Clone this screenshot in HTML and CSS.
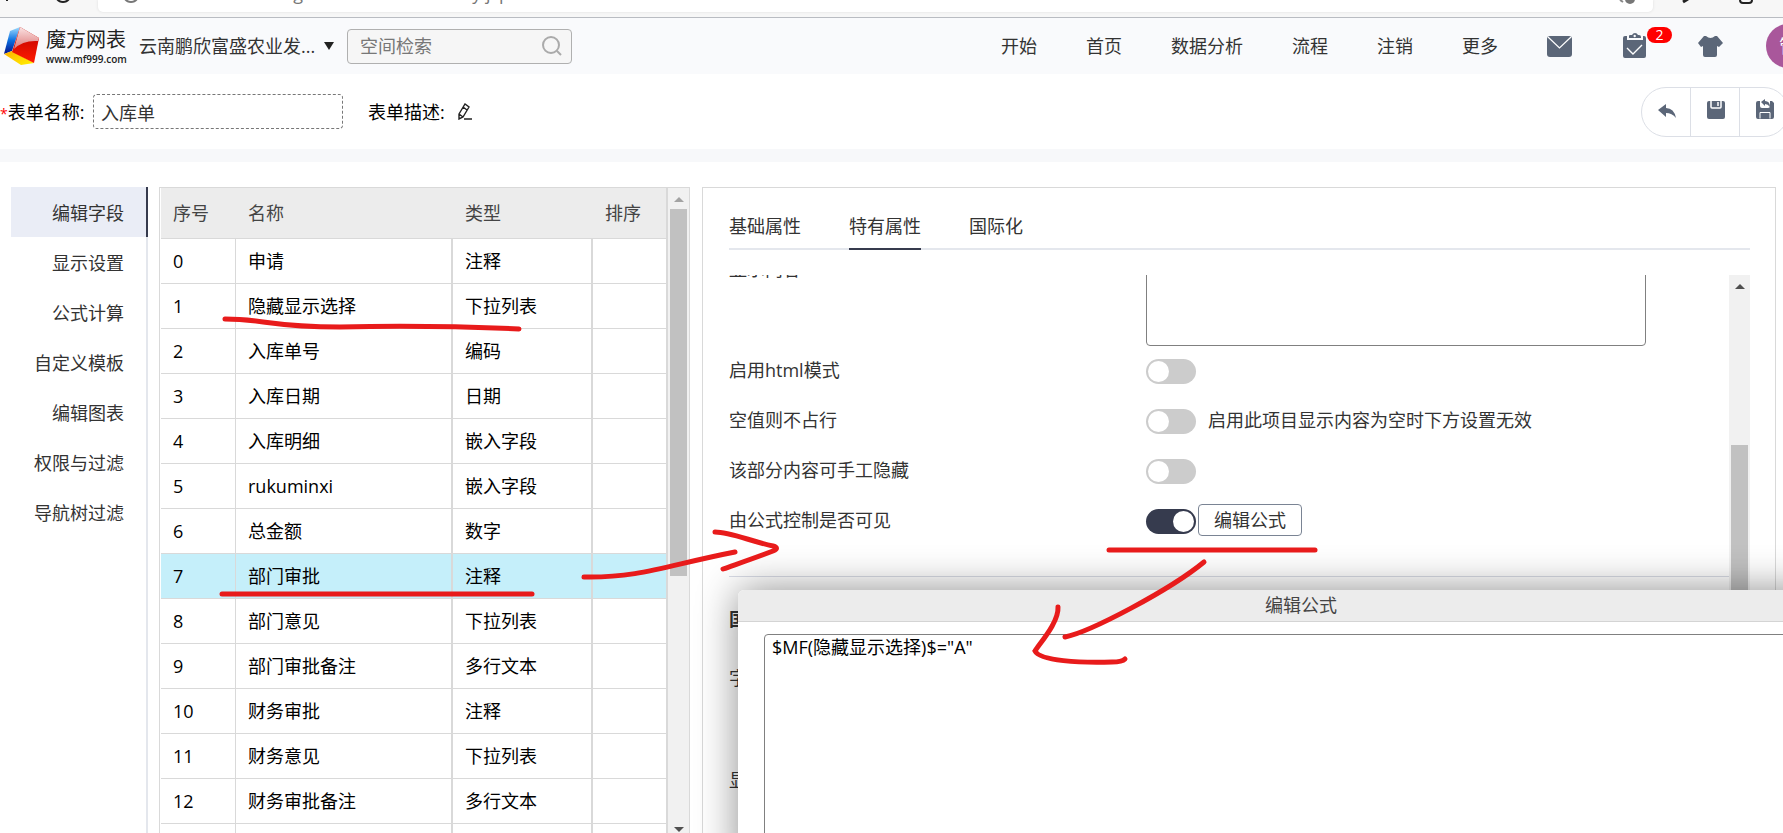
FILE: index.html
```html
<!DOCTYPE html>
<html lang="zh-CN">
<head>
<meta charset="utf-8">
<title>魔方网表</title>
<link rel="stylesheet" href="styles.css">
</head>
<body>
<div class="browser">
  <svg class="browser-icons" width="98" height="12" viewBox="0 0 98 12" aria-hidden="true"><path d="M7 0v1" stroke="#222" stroke-width="2"/><path d="M57 -1a7 6 0 0 0 12 0" fill="none" stroke="#222" stroke-width="2"/></svg>
  <div class="address">
    <svg width="40" height="12" viewBox="0 0 40 12" aria-hidden="true"><path d="M27 -1a7 6 0 0 0 12 0" fill="none" stroke="#777" stroke-width="2"/></svg>
    <span class="url">/magicflu/html/form/entry.jsp</span>
    <svg class="url-end" width="40" height="12" viewBox="0 0 40 12" aria-hidden="true"><path d="M7 0l3 2" stroke="#888" stroke-width="2"/><circle cx="17" cy="-1" r="5" fill="#777"/></svg>
  </div>
  <svg width="130" height="12" viewBox="0 0 130 12" aria-hidden="true"><path d="M30 2l5-3" stroke="#222" stroke-width="3"/><path d="M87 -2v2q0 3 3 3h6q3 0 3-3v-2" fill="none" stroke="#222" stroke-width="2"/></svg>
</div>

<header class="topbar">
  <a class="logo" href="#">
    <svg width="38" height="40" viewBox="0 0 38 40" aria-hidden="true">
      <defs>
        <linearGradient id="lb" x1="0" y1="0" x2="0" y2="1"><stop offset="0" stop-color="#9fdcff"/><stop offset=".5" stop-color="#0a6fe0"/><stop offset="1" stop-color="#04108a"/></linearGradient>
        <linearGradient id="lr" x1="0" y1="0" x2="0" y2="1"><stop offset="0" stop-color="#b90000"/><stop offset="1" stop-color="#ff1a00"/></linearGradient>
        <linearGradient id="lp" x1="0" y1="0" x2="0" y2="1"><stop offset="0" stop-color="#fbe3e3"/><stop offset="1" stop-color="#dd7a7a"/></linearGradient>
        <linearGradient id="ly" x1="0" y1="0" x2="1" y2="1"><stop offset="0" stop-color="#ffb000"/><stop offset="1" stop-color="#fff200"/></linearGradient>
      </defs>
      <path d="M17 1L7 5L1 28l8-3z" fill="url(#lb)"/>
      <path d="M1 28l8-3l22 12l-13 2z" fill="url(#ly)"/>
      <path d="M17 1L36 12L31 37L9 26z" fill="url(#lr)"/>
      <path d="M17 1L36 12l-1 3Q20 14 11 23z" fill="url(#lp)"/>
    </svg>
    <span class="logo-text"><b class="logo-name">魔方网表</b><span class="logo-url">www.mf999.com</span></span>
  </a>
  <button class="company" type="button">云南鹏欣富盛农业发...<span class="caret"></span></button>
  <label class="search"><input type="search" placeholder="空间检索" aria-label="空间检索">
    <svg width="20" height="20" viewBox="0 0 20 20" fill="none" stroke="#aaa" stroke-width="2" aria-hidden="true"><circle cx="9" cy="9" r="8"/><path d="M15 15l4 4"/></svg>
  </label>
  <nav class="nav">
    <a href="#">开始</a><a href="#">首页</a><a href="#">数据分析</a><a href="#">流程</a><a href="#">注销</a><a href="#">更多</a>
  </nav>
  <div class="tools">
    <button type="button" aria-label="邮件"><svg width="25" height="21" viewBox="0 0 25 21"><rect width="25" height="21" rx="3" fill="#5b6678"/><path d="M1 1l11.500 11L24 1" fill="none" stroke="#fff" stroke-width="1.200"/></svg></button>
    <button class="task" type="button" aria-label="任务"><svg width="24" height="26" viewBox="0 0 24 26"><path fill="#5b6678" d="M2 3h2v4h16V3h1q2 0 2 2v18q0 2-2 2H2q-2 0-2-2V5q0-2 2-2z"/><path fill="#5b6678" fill-rule="evenodd" d="M6 5V3q0-1 1-1h2q1-2 3-2t3 2h1q2 0 2 2v1zM10.500 3a1.200 1.200 0 1 0 2.400 0a1.200 1.200 0 1 0-2.400 0"/><path d="M4 15l6 6l9-9" fill="none" stroke="#fff" stroke-width="1.400"/></svg><span class="badge">2</span></button>
    <button type="button" aria-label="皮肤"><svg width="25" height="21" viewBox="0 0 25 21"><path fill="#5b6678" d="M6 0h2q4.500 4 9 0h2l6 7l-4 4l-2-1v9q0 2-2 2H7q-2 0-2-2v-9l-2 1l-3-4z"/></svg></button>
    <button class="avatar" type="button">管</button>
  </div>
</header>

<section class="formbar">
  <label class="form-label" for="fname"><i>*</i>表单名称:</label>
  <input id="fname" class="form-name" type="text" value="入库单">
  <span class="desc-label">表单描述:</span>
  <button class="pencil" type="button" aria-label="编辑描述"><svg width="16" height="17" viewBox="0 0 16 17" fill="none" stroke="#222" stroke-width="1.400"><path d="M2 11L8 1l4 3L6 14l-4 2zM6 4l4 3M2 11l4 3M7 16h8"/></svg></button>
  <div class="actions">
    <button type="button" aria-label="返回"><svg width="18" height="14" viewBox="0 0 18 14"><path fill="#5b6678" d="M0 6L8 0v4q8 0 10 10q-4-5-10-5v4z"/></svg></button>
    <button type="button" aria-label="保存"><svg width="18" height="18" viewBox="0 0 18 18"><rect width="18" height="18" rx="2" fill="#5b6678"/><path d="M4 0v6q0 1 1 1h8q1 0 1-1V0" fill="#5b6678" stroke="#fff" stroke-width="1.500"/><path d="M11 1v4" stroke="#fff" stroke-width="1.500"/></svg></button>
    <button type="button" aria-label="保存并返回"><svg width="18" height="20" viewBox="0 0 18 20"><path fill="#5b6678" d="M2 2h2v5q0 2 2 2h6q2 0 2-2V2h2l2 2v14q0 2-2 2H2q-2 0-2-2V4q0-2 2-2z"/><path fill="#5b6678" d="M5 3l4-3v2q5 0 5 6q-2-3-5-3v2z"/><path d="M4 19.500v-6h10v6" fill="none" stroke="#fff"/></svg></button>
  </div>
</section>

<main class="work">
  <nav class="side">
    <a class="on" href="#">编辑字段</a><a href="#">显示设置</a><a href="#">公式计算</a><a href="#">自定义模板</a><a href="#">编辑图表</a><a href="#">权限与过滤</a><a href="#">导航树过滤</a>
  </nav>

  <div class="fields">
    <table>
      <colgroup><col class="c-no"><col class="c-name"><col class="c-type"><col class="c-sort"></colgroup>
      <thead><tr><th>序号</th><th>名称</th><th>类型</th><th>排序</th></tr></thead>
      <tbody>
        <tr><td>0</td><td>申请</td><td>注释</td><td></td></tr>
        <tr><td>1</td><td>隐藏显示选择</td><td>下拉列表</td><td></td></tr>
        <tr><td>2</td><td>入库单号</td><td>编码</td><td></td></tr>
        <tr><td>3</td><td>入库日期</td><td>日期</td><td></td></tr>
        <tr><td>4</td><td>入库明细</td><td>嵌入字段</td><td></td></tr>
        <tr><td>5</td><td>rukuminxi</td><td>嵌入字段</td><td></td></tr>
        <tr><td>6</td><td>总金额</td><td>数字</td><td></td></tr>
        <tr class="picked"><td>7</td><td>部门审批</td><td>注释</td><td></td></tr>
        <tr><td>8</td><td>部门意见</td><td>下拉列表</td><td></td></tr>
        <tr><td>9</td><td>部门审批备注</td><td>多行文本</td><td></td></tr>
        <tr><td>10</td><td>财务审批</td><td>注释</td><td></td></tr>
        <tr><td>11</td><td>财务意见</td><td>下拉列表</td><td></td></tr>
        <tr><td>12</td><td>财务审批备注</td><td>多行文本</td><td></td></tr>
        <tr><td></td><td></td><td></td><td></td></tr>
      </tbody>
    </table>
    <div class="bar"><span class="up light"></span><span class="thumb"></span><span class="down"></span></div>
  </div>

  <section class="panel">
    <div class="tabs"><button type="button">基础属性</button><button class="on" type="button">特有属性</button><button type="button">国际化</button></div>
    <div class="scroll">
      <div class="props">
        <div class="prop tall"><label for="content">显示内容</label><textarea id="content"></textarea></div>
        <div class="prop"><label for="s1">启用html模式</label><input id="s1" class="switch" type="checkbox"></div>
        <div class="prop"><label for="s2">空值则不占行</label><input id="s2" class="switch" type="checkbox"><span class="note">启用此项目显示内容为空时下方设置无效</span></div>
        <div class="prop"><label for="s3">该部分内容可手工隐藏</label><input id="s3" class="switch" type="checkbox"></div>
        <div class="prop"><label for="s4">由公式控制是否可见</label><input id="s4" class="switch" type="checkbox" checked><button class="edit" type="button">编辑公式</button></div>
        <hr>
        <h2>国际化</h2>
        <p>字段名称</p>
        <p class="far">显示内容</p>
      </div>
      <div class="bar"><span class="up"></span><span class="thumb"></span></div>
    </div>
  </section>
</main>

<div class="dialog" role="dialog" aria-labelledby="dlg">
  <h1 id="dlg">编辑公式</h1>
  <div class="dialog-body"><textarea aria-label="公式">$MF(隐藏显示选择)$="A"</textarea></div>
</div>

<svg class="marks" width="1783" height="833" viewBox="0 0 1783 833" aria-hidden="true">
  <path d="M225 319C265 319 270 327 340 327Q430 325 519 329"/>
  <path d="M222 594H532"/>
  <path d="M584 577C640 578 668 565 735 552"/>
  <path d="M715 532C730 532 750 541 773 546Q780 548 773 551C755 558 740 563 723 569"/>
  <path d="M1109 550H1315"/>
  <path d="M1204 562C1170 590 1090 632 1065 637"/>
  <path d="M1058 607C1059 622 1040 643 1035 651C1040 661 1080 663 1112 662Q1122 662 1125 659"/>
</svg>
</body>
</html>
```

FILE: styles.css
```css
* { box-sizing: border-box; }

body {
  margin: 0;
  height: 100vh;
  overflow: hidden;
  position: relative;
  display: flex;
  flex-direction: column;
  background: #fff;
  color: #333;
  font: 18px/24px "Open Sans", "Noto Sans CJK SC", sans-serif;
}

button, input, textarea { font: inherit; color: inherit; }
button { padding: 0; border: 0; background: none; }
a { color: inherit; text-decoration: none; }
svg { display: block; flex: none; }

/* Browser strip */
.browser {
  flex: none;
  display: flex;
  height: 18px;
  overflow: hidden;
  background: #f7f7f7;
  border-bottom: 1px solid #b9bcc2;
}
.address {
  flex: 1;
  display: flex;
  height: 12px;
  overflow: hidden;
  background: #fff;
  border-radius: 0 0 5px 5px;
  box-shadow: 0 0 3px #ddd;
}
.url { margin: -19px 0 0 122px; color: #777; }
.url-end { margin-left: auto; }

/* Top bar */
.topbar {
  flex: none;
  display: flex;
  align-items: center;
  height: 56px;
  padding-left: 3px;
  background: #f9fafc;
}
.logo { display: flex; align-items: center; gap: 5px; width: 136px; }
.logo-text { display: flex; flex-direction: column; padding-top: 2px; color: #222; }
.logo-name { font-weight: 400; font-size: 20px; line-height: 24px; }
.logo-url { font: 10px/14px "Open Sans", sans-serif; font-weight: 600; }
.company { display: flex; align-items: center; justify-content: space-between; width: 195px; white-space: nowrap; }
.caret { border: 5px solid transparent; border-top: 8px solid #222; border-bottom: 0; }
.search {
  display: flex;
  align-items: center;
  width: 225px;
  height: 35px;
  margin-left: 13px;
  padding: 0 9px 0 12px;
  background: #f6f6f6;
  border: 1px solid #b0b0b0;
  border-radius: 4px;
}
.search input { flex: 1; min-width: 0; padding: 0; border: 0; background: none; outline: 0; }
.search input::placeholder { color: #777; opacity: 1; }
.nav { display: flex; gap: 49px; margin-left: auto; }
.tools { display: flex; align-items: center; margin-left: 49px; }
.tools button { margin-right: 51px; }
.tools .task { position: relative; }
.badge {
  position: absolute;
  left: 24px;
  top: -6px;
  width: 25px;
  height: 16px;
  border-radius: 8px;
  background: #f00;
  color: #fff;
  font-size: 14px;
  line-height: 16px;
}
.tools .task + button { margin-right: 43px; }
.tools .avatar {
  width: 44px;
  height: 44px;
  margin-right: -27px;
  border-radius: 50%;
  background: #a9579b;
  color: #fff;
}

/* Form name bar */
.formbar {
  flex: none;
  display: flex;
  align-items: center;
  height: 88px;
  border-bottom: 13px solid #f7f8fa;
  color: #000;
}
.form-label { width: 93px; white-space: nowrap; }
.form-label i { color: #f00; font-style: normal; font-size: 14px; line-height: 1; }
.form-name {
  width: 250px;
  height: 35px;
  padding: 0 7px;
  border: 1px dashed #777;
  border-radius: 4px;
  background: #fff;
  color: #333;
}
.desc-label { margin-left: 25px; }
.pencil { margin-left: 12px; }
.actions {
  display: flex;
  height: 50px;
  margin: 0 -6px 0 auto;
  border: 1px solid #dcdfe6;
  border-radius: 25px;
}
.actions button {
  display: flex;
  justify-content: center;
  width: 49px;
  padding: 13px 0 0 2px;
  border-left: 1px solid #dcdfe6;
}
.actions button:first-child { width: 48px; padding-top: 16px; border-left: 0; }
.actions button:last-child { padding-top: 11px; }

/* Work area */
.work { flex: 1; min-height: 0; display: flex; padding: 25px 7px 0 11px; }
.side { flex: none; width: 137px; border-right: 2px solid #e4e7ed; }
.side a { display: block; height: 50px; padding-right: 22px; margin-right: -2px; border-right: 2px solid transparent; line-height: 52px; text-align: right; }
.side .on { background: #eaedf6; border-right-color: #363b4e; }

.fields {
  flex: none;
  display: flex;
  width: 531px;
  margin: 0 12px 0 11px;
  padding-left: 1px;
  overflow: hidden;
  border: 1px solid #d9d9d9;
  border-bottom: 0;
}
table { width: 507px; table-layout: fixed; border-collapse: separate; border-spacing: 0; }
.c-no { width: 75px; }
.c-name { width: 217px; }
.c-type { width: 140px; }
.c-sort { width: 75px; }
th, td { padding: 0 0 0 12px; border-bottom: 1px solid #d9d9d9; text-align: left; font-weight: 400; }
th { height: 51px; background: #ececec; color: #444; }
td { height: 45px; border-right: 2px solid #d9d9d9; color: #000; }
td:first-child { border-right-width: 1px; }
th:last-child { border-right: 2px solid #d9d9d9; }
.picked td { background: #c5effa; }

.bar { display: flex; flex-direction: column; align-items: center; width: 21px; background: #f1f1f1; }
.up { border: 5px solid transparent; border-bottom: 5px solid #505050; border-top: 0; margin: 9px 0 7px; }
.up.light { border-bottom-color: #a3a3a3; }
.down { border: 5px solid transparent; border-top: 5px solid #505050; border-bottom: 0; margin: auto 0 1px; }
.thumb { width: 17px; background: #c1c1c1; }
.fields .thumb { height: 367px; }

/* Property panel */
.panel {
  flex: 1;
  min-width: 0;
  display: flex;
  flex-direction: column;
  padding: 15px 25px 0 26px;
  border: 1px solid #d9d9d9;
  border-bottom: 0;
}
.tabs { flex: none; display: flex; gap: 48px; border-bottom: 2px solid #e4e7ed; }
.tabs button { height: 47px; margin-bottom: -2px; border-bottom: 2px solid transparent; line-height: 44px; }
.tabs .on { border-bottom-color: #363b4e; }
.scroll { flex: 1; min-height: 0; display: flex; margin-top: 25px; overflow: hidden; }
.props { flex: 1; margin-top: -30px; }
.prop { display: flex; align-items: center; height: 50px; }
.prop label { width: 417px; }
.tall { height: 100px; align-items: flex-start; }
.tall label { padding-top: 12px; }
.tall textarea { width: 500px; height: 101px; border: 1px solid #808080; border-radius: 4px; resize: none; }
.switch {
  appearance: none;
  flex: none;
  width: 50px;
  height: 25px;
  margin: 2px 0 0;
  padding: 2px;
  border-radius: 13px;
  background: #ccc;
}
.switch::before { content: ""; display: block; width: 21px; height: 21px; border-radius: 50%; background: #fff; }
.switch:checked { background: #363b4e; padding-left: 27px; }
.note { margin-left: 12px; }
.edit { width: 104px; height: 32px; margin-left: 2px; border: 1px solid #7a8494; border-radius: 4px; background: #fff; }
hr { height: 1px; margin: 31px 0 30px; border: 0; background: #d9dce6; }
h2 { margin: 0; font-size: 18px; line-height: 24px; }
p { margin: 35px 0 0; }
.far { margin-top: 78px; }
.scroll .thumb { flex: 1; margin-top: 149px; }

/* Formula dialog */
.dialog {
  position: absolute;
  left: 738px;
  right: -81px;
  top: 590px;
  bottom: -40px;
  display: flex;
  flex-direction: column;
  border-radius: 6px;
  background: #fff;
  box-shadow: 0 0 40px rgba(0, 0, 0, .45);
}
h1 {
  margin: 0;
  border-bottom: 1px solid #d4d4d4;
  border-radius: 6px 6px 0 0;
  background: #ececec;
  color: #444;
  font-size: 18px;
  font-weight: 400;
  line-height: 31px;
  text-align: center;
}
.dialog-body { flex: 1; display: flex; padding: 12px 26px; }
.dialog textarea { flex: 1; padding: 0 7px; border: 1px solid #808080; border-radius: 4px; color: #000; resize: none; }

.marks { position: absolute; left: 0; top: 0; pointer-events: none; fill: none; stroke: #e81b1b; stroke-width: 5; stroke-linecap: round; }
```
